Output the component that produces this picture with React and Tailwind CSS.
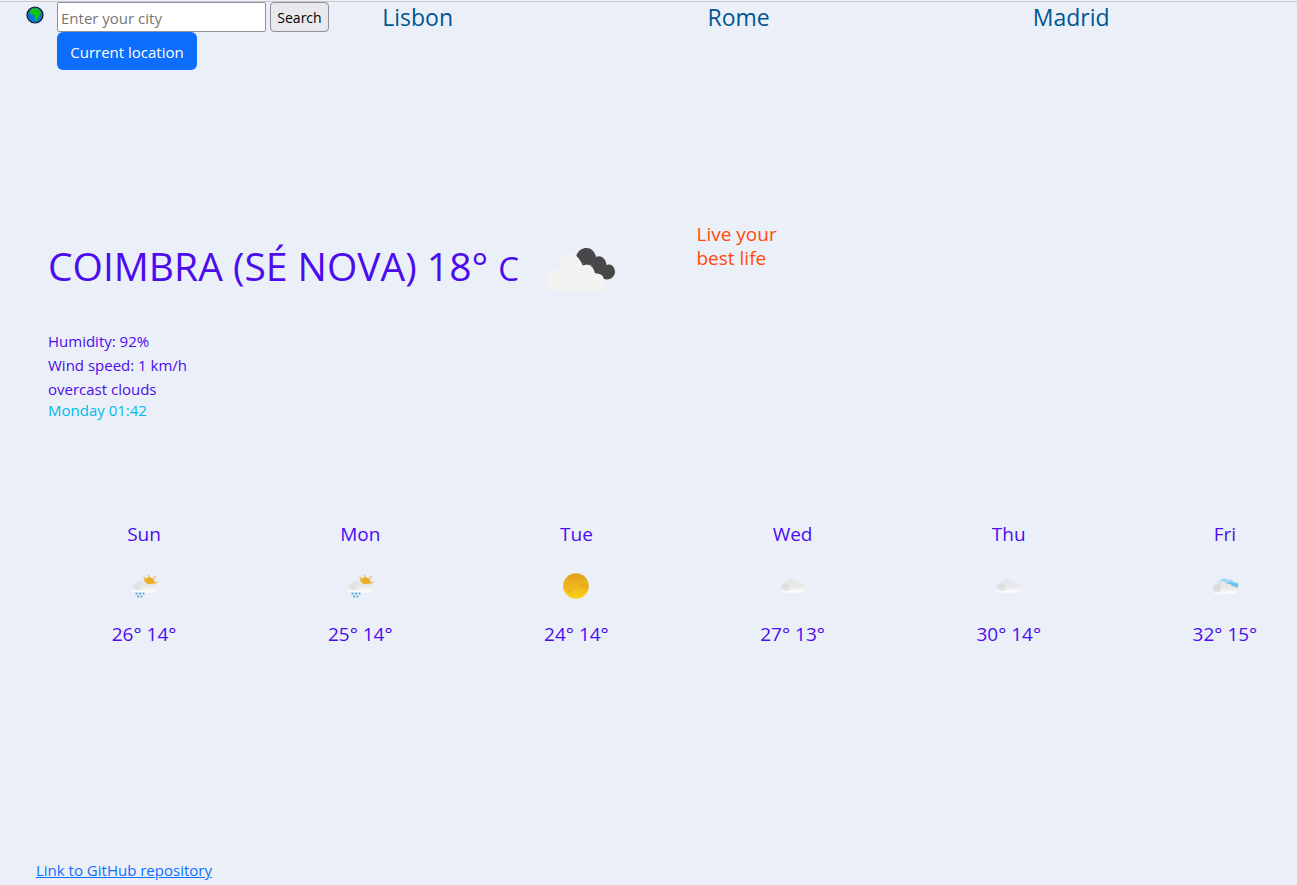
import React from "react";

const cities = ["Lisbon", "Rome", "Madrid"];

const forecast = [
  { day: "Sun", icon: "rain", max: 26, min: 14 },
  { day: "Mon", icon: "rain", max: 25, min: 14 },
  { day: "Tue", icon: "sun", max: 24, min: 14 },
  { day: "Wed", icon: "cloud", max: 27, min: 13 },
  { day: "Thu", icon: "cloud", max: 30, min: 14 },
  { day: "Fri", icon: "partly", max: 32, min: 15 },
];

function Globe() {
  return (
    <svg viewBox="0 0 18 18" className="size-[18px]" aria-hidden="true">
      <circle cx="9" cy="9" r="8" fill="#0b74d4" stroke="#10131c" strokeWidth="1.2" />
      <path
        d="M4 5 6.500 2.600l4-.4 3 1.6.8 2 1 1.400-1.600 1.300-1 2.800-1.500 2.700-1.600 1-.8-2.600.1-2.600-1.400-1.200-2.400.2-1.100-1.800Z"
        fill="#16c60c"
      />
      <path d="M9.400 4.500 11.500 5.600" stroke="#0b9a4c" strokeWidth=".8" />
    </svg>
  );
}

function BrokenClouds() {
  return (
    <svg viewBox="0 0 100 70" className="h-[70px] w-[100px]" role="img" aria-label="overcast clouds">
      <path
        d="M76 45.500C71 45 67 42 65 38C58 38 56 34 54 30C50 30 46 25 45.500 21C48 16 51 14 55.500 14C60.500 14 64 18 65 23C69 20.500 75 24 75.500 31C80 29 84 33 84 38C84 42 80 45.500 76 45.500Z"
        fill="#48484a"
      />
      <path
        d="M45.500 21C48 24 51 27 52 31C57 28 63 31 64.500 39C70 38 74 43 74 48C74 53 71 57 66 57H26C19 57 15 52 15 46C15 40 20 35 28 35C27 27 32 20 39 20C42 20 44 20.200 45.500 21Z"
        fill="#f2f2f0"
      />
      <path d="M45.500 21.500C48 24 50.500 27 52 31C57 28.500 62.500 31 64.500 39C69 38.500 72.500 41 73.500 45" fill="none" stroke="#2b2b2e" strokeWidth="1" />
    </svg>
  );
}

function ForecastIcon({ kind }) {
  const id = React.useId();
  return (
    <svg viewBox="0 -1 50 40" className="h-10 w-[50px]" role="img" aria-label={kind}>
      <defs>
        <linearGradient id={id + "c"} x1="0" y1="0" x2="0" y2="1">
          <stop offset="0" stopColor="#e2e4e7" />
          <stop offset=".55" stopColor="#e8e9ea" />
          <stop offset="1" stopColor="#ffffff" />
        </linearGradient>
        <linearGradient id={id + "s"} x1="0" y1="0" x2="0" y2="1">
          <stop offset="0" stopColor="#dfa21b" />
          <stop offset=".5" stopColor="#edb51d" />
          <stop offset="1" stopColor="#fbd319" />
        </linearGradient>
      </defs>
      {kind === "sun" && (
        <>
          <circle cx="25" cy="21" r="12.800" fill={"url(#" + id + "s)"} />
          <path d="M17 13h6v3h-6ZM29 19h8v4h-8ZM17 25h4v2h-4Z" fill="#f29d20" opacity=".5" />
        </>
      )}
      {kind === "rain" && (
        <>
          <path
            d="M30 10v3M24.500 12l2 2M36.500 11.500 34 13.500M35.500 17.500h3"
            stroke="#f2b544"
            strokeWidth="1.300"
          />
          <path d="M25 17C25 14 27.500 12.500 30.500 12.500C33.500 12.500 35.500 14.500 35.500 17.500V21H28Z" fill="#efae20" />
          <path
            d="M17 27.500C10.500 27.500 10.500 17.500 17 17.500C18.500 14 25 14 27 17.500C28.500 19.500 31 20 33 18.500C39 19 39 27.500 33 27.500Z"
            fill={"url(#" + id + "c)"}
          />
          <circle cx="18.500" cy="22" r="3.500" fill="#cfd2d6" opacity=".4" />
          <path
            d="M17.500 27.500v2M21 27.500v2M24.500 27.500v2M19 30.500v2M22.500 30.500v2"
            stroke="#55a9d6"
            strokeWidth="1.900"
          />
        </>
      )}
      {kind === "cloud" && (
        <>
          <path
            d="M17 27.500C10 27.500 10 18.500 17 18.500C19 12.500 25.500 12.500 27.500 17.500C30 16.500 31.500 17.500 32 19.500C39 18.500 39 27.500 33 27.500Z"
            fill={"url(#" + id + "c)"}
          />
          <circle cx="17.500" cy="22.500" r="3.800" fill="#d2d4d8" opacity=".5" />
        </>
      )}
      {kind === "partly" && (
        <>
          <path
            d="M17 19C17 16 19 16 20 16C21 13 26 13 28 15C31 13.500 33 15 34 17C37.500 16.500 39.500 18 38 22L36 24Z"
            fill="#9dd6f6"
          />
          <path d="M27 18C30 16.500 36 18 38 20L37 23C33 23 30 22 27 18Z" fill="#6bbcee" />
          <path
            d="M16 28.500C9.500 28.500 9.500 19.500 16 19.500C18 15 25 15 27 19C30 18 31.500 19.500 32 21C38.500 20 39 28.500 33 28.500Z"
            fill={"url(#" + id + "c)"}
          />
          <circle cx="17" cy="23.500" r="4" fill="#c9cbce" opacity=".5" />
        </>
      )}
    </svg>
  );
}

export default function App() {
  return (
    <div className="flex min-h-screen flex-col overflow-x-hidden bg-[#ebf0f8] font-['Open_Sans',sans-serif] text-[15px] leading-6 text-[#4c0ced]">
      <header className="mt-px flex border-t border-[#c8c8c8]">
        <div className="flex w-[57px] shrink-0 justify-center pr-3 pl-6 pt-1">
          <span className="shrink-0">
            <Globe />
          </span>
        </div>
        <div className="grid w-full shrink-0 grid-cols-4 gap-1">
          <div>
            <form className="flex gap-1" onSubmit={(e) => e.preventDefault()}>
              <input
                type="text"
                aria-label="City"
                placeholder="Enter your city"
                className="h-[30px] w-[209px] rounded-[2px] border border-[#8f8f9d] bg-white px-[3px] pt-0.5 text-black placeholder:text-[#757575]"
              />
              <button
                type="submit"
                className="h-[30px] w-[59px] rounded border border-[#8f8f9d] bg-[#e9e9ed] pt-0.5 text-center text-sm text-black"
              >
                Search
              </button>
            </form>
            <button type="button" className="h-[38px] w-[140px] rounded-md bg-[#0d6efd] pt-0.5 text-white">
              Current location
            </button>
          </div>
          {cities.map((city) => (
            <div key={city}>
              <a href="#" className="text-[23px] leading-[30px] text-[#005693]">
                {city}
              </a>
            </div>
          ))}
        </div>
      </header>

      <main className="pl-9">
        <section className="mt-[152px] grid w-[calc(100%+36px)] grid-cols-2">
          <div className="pl-3">
            <div className="flex h-[90px] items-center gap-3">
              <h1 className="whitespace-nowrap text-[39px] leading-[48px]">
                COIMBRA (SÉ NOVA) 18° <small className="text-[33px]">C</small>
              </h1>
              <div className="pt-1">
                <BrokenClouds />
              </div>
            </div>
            <ul className="mt-[17px]">
              <li>Humidity: 92%</li>
              <li>Wind speed: 1 km/h</li>
              <li>overcast clouds</li>
            </ul>
            <p className="leading-[18px] text-[#00b8f0]">Monday 01:42</p>
          </div>
          <p className="w-28 pl-3 text-[19px] leading-6 text-[#ff4b0a]">Live your best life</p>
        </section>

        <section className="mt-[103px] grid w-[calc(100%+36px)] grid-cols-6 text-center text-[19px] leading-6">
          {forecast.map((f) => (
            <div key={f.day} className="flex flex-col items-center">
              <h2>{f.day}</h2>
              <div className="my-[18px]">
                <ForecastIcon kind={f.icon} />
              </div>
              <p>
                {f.max}° {f.min}°
              </p>
            </div>
          ))}
        </section>
      </main>

      <footer className="mt-auto pb-[3px] pl-9">
        <a href="#" className="text-[#0d6efd] underline">
          Link to GitHub repository
        </a>
      </footer>
    </div>
  );
}
